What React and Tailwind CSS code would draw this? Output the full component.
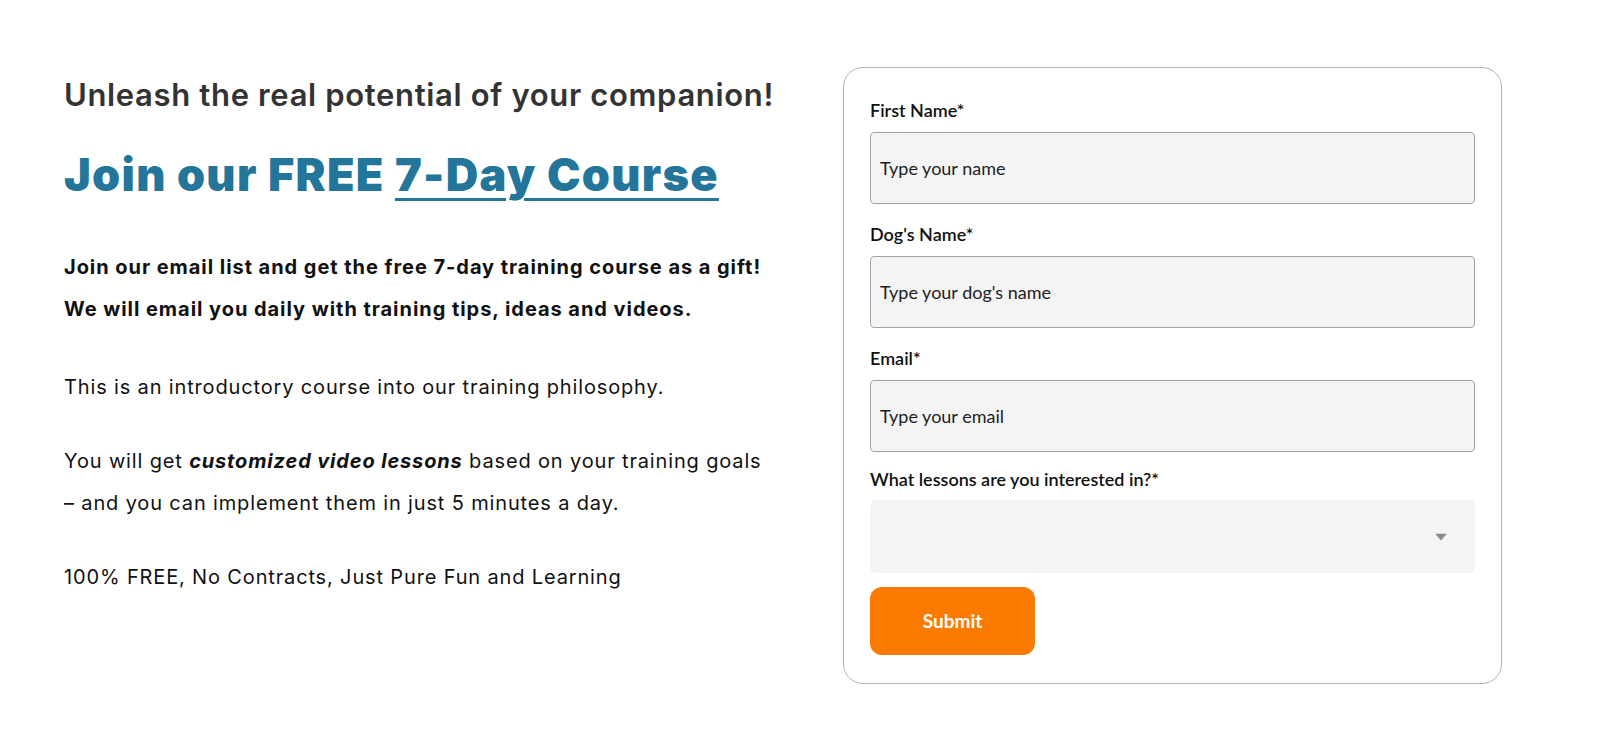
import { useState } from "react";

const fields = [
    { label: "First Name*", placeholder: "Type your name", type: "text" },
    { label: "Dog's Name*", placeholder: "Type your dog's name", type: "text" },
    { label: "Email*", placeholder: "Type your email", type: "email" },
];

export default function App() {
    const [lesson, setLesson] = useState("");

    return (
        <div className="min-h-[748px] bg-white flex items-start pt-[67px] pl-[64px] font-['Inter',sans-serif]">
            {/* left copy */}
            <div className="w-[779px] shrink-0 pt-[10px]">
                <h2 className="text-[31px] leading-[36px] font-semibold text-[#333333] tracking-[0.65px]">
                    Unleash the real potential of your companion!
                </h2>
                <h1 className="mt-[36px] text-[45px] leading-[52px] font-black text-[#23769a] tracking-[1.3px]">
                    Join our FREE{" "}
                    <span className="underline decoration-[3px] underline-offset-[7px]">7-Day Course</span>
                </h1>

                <div className="mt-[45px] text-[20px] leading-[42px] text-[#111111]">
                    <p className="font-bold tracking-[0.95px]">
                        Join our email list and get the free 7-day training course as a gift!
                        <br />
                        We will email you daily with training tips, ideas and videos.
                    </p>
                    <div className="tracking-[0.85px]">
                        <p className="mt-[36px]">This is an introductory course into our training philosophy.</p>
                        <p className="mt-[32px]">
                            You will get <em className="font-bold">customized video lessons</em> based on your training goals
                            <br />– and you can implement them in just 5 minutes a day.
                        </p>
                        <p className="mt-[32px]">100% FREE, No Contracts, Just Pure Fun and Learning</p>
                    </div>
                </div>
            </div>

            {/* signup card */}
            <form
                onSubmit={e => e.preventDefault()}
                className="w-[659px] shrink-0 border border-[#b5b5b5] rounded-[20px] pt-[30px] pb-[28px] px-[26px] font-['Lato',sans-serif]"
            >
                {fields.map(f => (
                    <div key={f.label} className="mb-[18px]">
                        <label className="block text-[18px] leading-6 font-semibold text-[#111111] mb-[10px]">{f.label}</label>
                        <input
                            type={f.type}
                            placeholder={f.placeholder}
                            className="w-full h-[72px] bg-[#f4f4f4] border border-[#a3a3a3] rounded-[4px] px-[9px] text-[18px] text-[#222222] placeholder:text-[#222222] outline-none"
                        />
                    </div>
                ))}

                <div className="mb-[14px]">
                    <label className="block text-[18px] leading-6 font-semibold text-[#111111] mb-[9px] -mt-[3px]">
                        What lessons are you interested in?*
                    </label>
                    <div className="relative">
                        <select
                            value={lesson}
                            onChange={e => setLesson(e.target.value)}
                            className="appearance-none w-full h-[73px] bg-[#f4f4f4] rounded-[6px] px-[9px] text-[18px] text-[#222222] outline-none"
                        >
                            <option value=""></option>
                            <option value="basic">Basic obedience</option>
                            <option value="tricks">Tricks</option>
                        </select>
                        <svg
                            className="absolute right-[28px] top-1/2 -translate-y-1/2 pointer-events-none"
                            width="12"
                            height="7"
                            viewBox="0 0 12 7"
                        >
                            <path d="M0 0h12L6 7z" fill="#8a8a8a" />
                        </svg>
                    </div>
                </div>

                <button
                    type="submit"
                    className="w-[165px] h-[68px] rounded-[12px] bg-[#fb7a00] text-white text-[19px] font-bold"
                >
                    Submit
                </button>
            </form>
        </div>
    );
}
